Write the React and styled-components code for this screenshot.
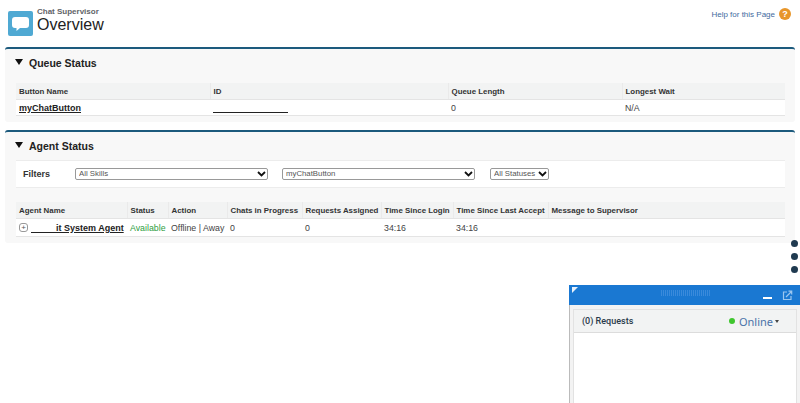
import React from "react";
import styled, { createGlobalStyle } from "styled-components";

const chevron =
  "data:image/svg+xml;utf8," +
  encodeURIComponent(
    '<svg xmlns="http://www.w3.org/2000/svg" width="9" height="6" viewBox="0 0 9 6"><path d="M1 1l3.5 3.5L8 1" fill="none" stroke="#111" stroke-width="1.8"/></svg>'
  );

const Global = createGlobalStyle`
  html, body { margin: 0; padding: 0; background: #fff; height: 100%; overflow: hidden; }
  body { font-family: "Liberation Sans", Arial, sans-serif; font-size: 9px; color: #333; }
  #root { position: relative; height: 403px; overflow: hidden; }
`;

const Page = styled.div`
  display: flex;
  flex-direction: column;
  padding: 0 5px;
`;
const Header = styled.header`
  display: flex;
  justify-content: space-between;
  align-items: flex-start;
  box-sizing: border-box;
  height: 47px;
  padding: 3px 4px 0 3px;
`;
const TitleGroup = styled.div`
  display: flex;
  gap: 4px;
  padding-top: 3px;
`;
const ChatLogo = styled.svg`
  width: 25px;
  height: 25px;
  margin-top: 5px;
  flex: none;
`;
const Titles = styled.div`
  display: flex;
  flex-direction: column;
`;
const Eyebrow = styled.div`
  font-size: 8px;
  font-weight: 700;
  line-height: 8px;
  color: #5f6368;
  margin-top: 2px;
`;
const PageTitle = styled.h1`
  margin: 0;
  font-size: 16px;
  font-weight: 400;
  line-height: 17px;
  color: #222;
`;
const Help = styled.div`
  display: flex;
  align-items: center;
  gap: 4px;
  margin-top: 5px;
  color: #3f6b9e;
  font-size: 8px;
`;
const HelpIcon = styled.span`
  width: 12px;
  height: 12px;
  border-radius: 50%;
  background: #e8962a;
  color: #fff;
  font-size: 9px;
  font-weight: 700;
  line-height: 12px;
  text-align: center;
`;
const Panel = styled.section`
  background: #f8f8f8;
  border-top: 2px solid #1c5a7d;
  border-radius: 3px;
  padding: 0 10px 6px 11px;
  margin-bottom: 8px;
  height: ${(p) => p.$height}px;
  box-sizing: border-box;
`;
const PanelHead = styled.div`
  display: flex;
  align-items: center;
  gap: 6px;
  height: 28px;
`;
const Caret = styled.span`
  flex: none;
  width: 0;
  height: 0;
  border-left: 4px solid transparent;
  border-right: 4px solid transparent;
  border-top: 6px solid #111;
  margin-left: -1px;
  margin-top: -3px;
`;
const PanelTitle = styled.h2`
  margin: 0;
  font-size: 10.5px;
  font-weight: 700;
  color: #222;
`;
const Table = styled.table`
  width: 769px;
  table-layout: fixed;
  border-collapse: collapse;
  background: #fff;
  margin-top: ${(p) => p.$top || 0}px;
`;
const Col = styled.col`
  width: ${(p) => p.$w}px;
`;
const Th = styled.th`
  height: 16px;
  padding: 0 3px;
  background: #f2f3f3;
  border-bottom: 1px solid #e4e4e4;
  border-left: 1px solid #eaeaea;
  font-size: 7.9px;
  font-weight: 700;
  text-align: left;
  color: #333;
  white-space: nowrap;
  &:first-child { border-left: 0; }
`;
const Td = styled.td`
  height: ${(p) => p.$h || 15}px;
  padding: 0 3px;
  font-size: 8.8px;
  color: #444;
  white-space: nowrap;
  border-bottom: 1px solid #e4e4e4;
  ${(p) => p.$green && "color: #2e9e3f;"}
`;
const RowLink = styled.a`
  font-weight: 700;
  font-size: 9px;
  color: #222;
  text-decoration: underline;
  white-space: pre;
`;
const IdLink = styled.a`
  display: inline-block;
  width: 75px;
  height: 9px;
  border-bottom: 1px solid #222;
  vertical-align: middle;
`;
const Expand = styled.span`
  display: inline-block;
  width: 7px;
  height: 7px;
  border: 1px solid #999;
  border-radius: 3px;
  color: #555;
  font-size: 8px;
  line-height: 7px;
  text-align: center;
  margin-right: 3px;
  vertical-align: 1px;
`;
const Filters = styled.div`
  display: flex;
  align-items: center;
  width: 769px;
  height: 28px;
  box-sizing: border-box;
  padding-left: 7px;
  background: #fff;
  border-top: 1px solid #ececec;
  border-bottom: 1px solid #ececec;
`;
const FilterLabel = styled.label`
  font-size: 9px;
  font-weight: 700;
  width: 52px;
`;
const Select = styled.select`
  appearance: none;
  box-sizing: border-box;
  width: ${(p) => p.$w}px;
  height: 12px;
  margin-right: ${(p) => p.$gap || 0}px;
  font-family: "Liberation Sans", Arial, sans-serif;
  font-size: 7.8px;
  line-height: 10px;
  color: #555;
  background: #fff url("${chevron}") no-repeat right 1px center;
  border: 1px solid #999;
  border-radius: 2px;
  padding: 0 0 0 3px;
`;
const Dots = styled.div`
  position: absolute;
  left: 791px;
  top: 240px;
  display: flex;
  flex-direction: column;
  gap: 6px;
`;
const Dot = styled.span`
  width: 7px;
  height: 7px;
  border-radius: 50%;
  background: #1f3a50;
`;
const Widget = styled.aside`
  position: absolute;
  left: 569px;
  top: 285px;
  width: 231px;
  height: 118px;
  background: #f3f3f3;
  box-shadow: inset 1px 0 0 #bbb;
  display: flex;
  flex-direction: column;
`;
const WidgetBar = styled.div`
  position: relative;
  flex: none;
  height: 20px;
  background: #1a78d2;
  display: flex;
  align-items: center;
  justify-content: flex-end;
  gap: 10px;
  padding-right: 7px;
`;
const Corner = styled.span`
  position: absolute;
  left: 3px;
  top: 2px;
  width: 0;
  height: 0;
  border-top: 6px solid #e8f1fb;
  border-right: 6px solid transparent;
`;
const Grip = styled.span`
  position: absolute;
  left: 92px;
  top: 5px;
  width: 50px;
  height: 6px;
  background: repeating-linear-gradient(90deg, #3a8adb 0 1px, #1a78d2 1px 2px);
`;
const Minimize = styled.span`
  width: 9px;
  height: 2px;
  background: #fff;
  margin-top: 6px;
`;
const PopIcon = styled.svg`
  width: 11px;
  height: 11px;
`;
const WidgetBody = styled.div`
  flex: 1;
  margin: 4px 3px 0 4px;
  background: #fff;
  border: 1px solid #e2e2e2;
  border-bottom: 0;
`;
const WidgetHead = styled.div`
  display: flex;
  justify-content: space-between;
  align-items: center;
  height: 22px;
  padding: 0 17px 0 8px;
  background: #f2f3f3;
  border-bottom: 1px solid #dcdcdc;
`;
const Requests = styled.span`
  font-family: Roboto, "Noto Sans", sans-serif;
  font-size: 9px;
  font-weight: 500;
  color: #2a3a4a;
`;
const Presence = styled.span`
  display: flex;
  align-items: center;
  gap: 3px;
  font-family: "Noto Sans", Roboto, sans-serif;
  font-size: 11px;
  color: #4a72a8;
`;
const Green = styled.span`
  width: 6px;
  height: 6px;
  border-radius: 50%;
  background: #3fc62e;
  margin-right: 1px;
`;
const Arrow = styled.span`
  width: 0;
  height: 0;
  margin-left: -1px;
  border-left: 2.5px solid transparent;
  border-right: 2.5px solid transparent;
  border-top: 3px solid #444;
`;

export default function App() {
  return (
    <>
      <Global />
      <Page>
        <Header>
          <TitleGroup>
            <ChatLogo viewBox="0 0 25 25">
              <rect width="25" height="25" rx="2" fill="#4fa9d3" />
              <path d="M7 6h11a3 3 0 0 1 3 3v5a3 3 0 0 1-3 3h-6l-3.5 3v-3H7a3 3 0 0 1-3-3V9a3 3 0 0 1 3-3z" fill="#fff" />
            </ChatLogo>
            <Titles>
              <Eyebrow>Chat Supervisor</Eyebrow>
              <PageTitle>Overview</PageTitle>
            </Titles>
          </TitleGroup>
          <Help>
            Help for this Page <HelpIcon>?</HelpIcon>
          </Help>
        </Header>

        <Panel $height={75}>
          <PanelHead>
            <Caret />
            <PanelTitle>Queue Status</PanelTitle>
          </PanelHead>
          <Table $top={6}>
            <colgroup>
              <Col $w={194} />
              <Col $w={238} />
              <Col $w={174} />
              <Col $w={163} />
            </colgroup>
            <thead>
              <tr>
                <Th>Button Name</Th>
                <Th>ID</Th>
                <Th>Queue Length</Th>
                <Th>Longest Wait</Th>
              </tr>
            </thead>
            <tbody>
              <tr>
                <Td><RowLink>myChatButton</RowLink></Td>
                <Td><IdLink /></Td>
                <Td>0</Td>
                <Td>N/A</Td>
              </tr>
            </tbody>
          </Table>
        </Panel>

        <Panel $height={113}>
          <PanelHead>
            <Caret />
            <PanelTitle>Agent Status</PanelTitle>
          </PanelHead>
          <Filters>
            <FilterLabel>Filters</FilterLabel>
            <Select $w={193} $gap={14}><option>All Skills</option></Select>
            <Select $w={193} $gap={15}><option>myChatButton</option></Select>
            <Select $w={59}><option>All Statuses</option></Select>
          </Filters>
          <Table $top={14}>
            <colgroup>
              <Col $w={111} />
              <Col $w={41} />
              <Col $w={59} />
              <Col $w={75} />
              <Col $w={79} />
              <Col $w={72} />
              <Col $w={95} />
              <Col $w={237} />
            </colgroup>
            <thead>
              <tr>
                <Th>Agent Name</Th>
                <Th>Status</Th>
                <Th>Action</Th>
                <Th>Chats in Progress</Th>
                <Th>Requests Assigned</Th>
                <Th>Time Since Login</Th>
                <Th>Time Since Last Accept</Th>
                <Th>Message to Supervisor</Th>
              </tr>
            </thead>
            <tbody>
              <tr>
                <Td $h={17}><Expand>+</Expand><RowLink>{"          it System Agent"}</RowLink></Td>
                <Td $h={17} $green>Available</Td>
                <Td $h={17}>Offline | Away</Td>
                <Td $h={17}>0</Td>
                <Td $h={17}>0</Td>
                <Td $h={17}>34:16</Td>
                <Td $h={17}>34:16</Td>
                <Td $h={17} />
              </tr>
            </tbody>
          </Table>
        </Panel>
      </Page>

      <Dots>
        <Dot />
        <Dot />
        <Dot />
      </Dots>

      <Widget>
        <WidgetBar>
          <Corner />
          <Grip />
          <Minimize />
          <PopIcon viewBox="0 0 11 11" fill="none" stroke="#9cc6ef" strokeWidth="1.2">
            <path d="M5 2H1.5v7.5H9V6" />
            <path d="M4 7l5.5-5.5M6.5 1.2h3.2v3.2" />
          </PopIcon>
        </WidgetBar>
        <WidgetBody>
          <WidgetHead>
            <Requests>(0) Requests</Requests>
            <Presence>
              <Green />
              Online
              <Arrow />
            </Presence>
          </WidgetHead>
        </WidgetBody>
      </Widget>
    </>
  );
}
